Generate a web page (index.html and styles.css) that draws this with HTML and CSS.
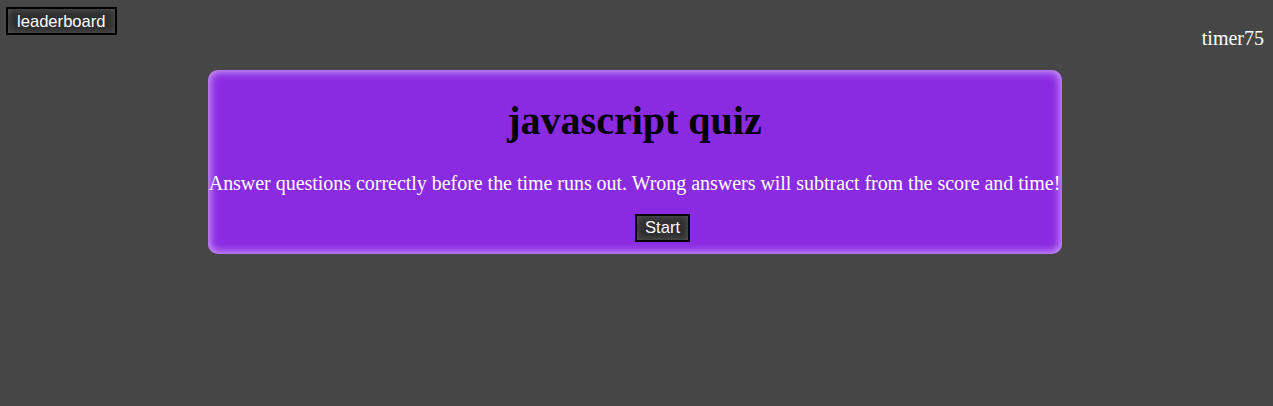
FILE: index.html
```html
<!DOCTYPE html>
<html>
<head>
<meta charset="utf-8">
<link rel="stylesheet" href="styles.css">
</head>
<body>
<header class="top">
  <button class="btn leader">leaderboard</button>
  <div class="timer">timer75</div>
</header>
<main class="card">
  <h1 class="title">javascript quiz</h1>
  <div class="intro-row">
    <p class="intro">Answer questions correctly before the time runs out. Wrong answers will subtract from the score and time!</p>
  </div>
  <button class="btn start">Start</button>
</main>
</body>
</html>
```
FILE: styles.css
```css
html, body {
  margin: 0;
  padding: 0;
  background: #464646;
  font-family: "Liberation Serif", "Times New Roman", serif;
  height: 100%;
}
.top {
  display: flex;
  justify-content: space-between;
  align-items: flex-start;
  padding: 7px 9px 0 6px;
}
.btn {
  font-family: "Liberation Sans", Arial, sans-serif;
  font-size: 16.6px;
  color: #fff;
  background: #303030;
  border: 2px solid #000;
  box-shadow: inset 0 0 6px rgba(120,120,120,0.6);
  padding: 3px 9px 2px;
  line-height: 19px;
  cursor: pointer;
}
.timer {
  color: #fff;
  font-size: 20px;
  margin-top: 20px;
}
.card {
  width: 854px;
  margin: 20px 0 0 calc(50% - 429px);
  box-sizing: border-box;
  background: #8a2be2;
  border-radius: 10px;
  box-shadow: inset 0 0 8px 2px rgba(230, 200, 255, 0.75);
  text-align: center;
  padding: 26px 0 12px;
}
.title {
  margin: 0;
  font-size: 40px;
  line-height: 50px;
  color: #000;
}
.intro-row {
  display: flex;
  justify-content: center;
  margin-top: 25px;
}
.intro {
  margin: 0;
  color: #fff;
  font-size: 20px;
  line-height: 24px;
  white-space: nowrap;
  letter-spacing: -0.03px;
}
.start {
  margin: 19px 0 0 56px;
  padding: 2px 8px 3px;
}
```
